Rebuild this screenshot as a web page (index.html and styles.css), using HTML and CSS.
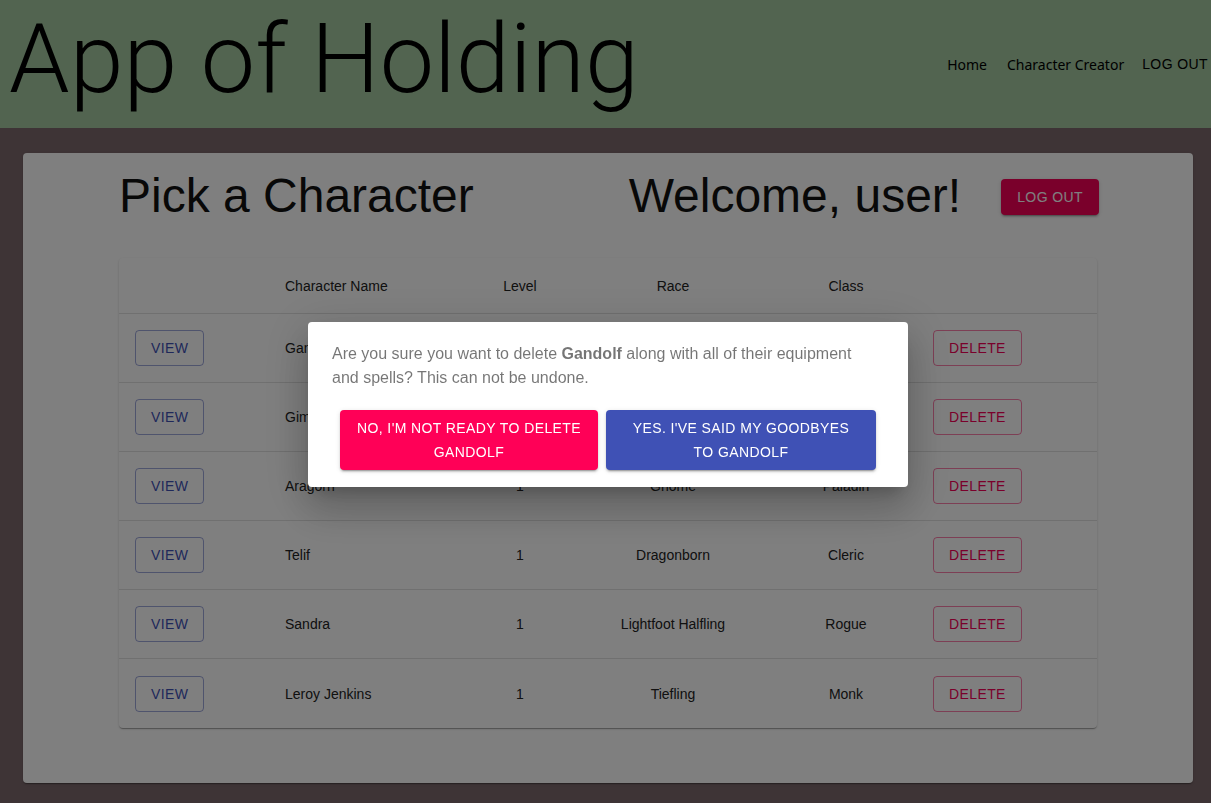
FILE: index.html
```html
<!DOCTYPE html>
<html lang="en">
<head>
<meta charset="utf-8">
<title>App of Holding</title>
<link rel="stylesheet" href="styles.css">
</head>
<body>
<header class="topbar">
  <h1 class="brand">App of Holding</h1>
  <nav class="nav">
    <a class="nav-link" href="#">Home</a>
    <a class="nav-link" href="#">Character Creator</a>
    <button class="nav-logout">LOG OUT</button>
  </nav>
</header>
<main class="main">
  <section class="card">
    <div class="title-row">
      <h2 class="title">Pick a Character</h2>
      <div class="welcome-group">
        <h2 class="title">Welcome, user!</h2>
        <button class="btn-contained">LOG OUT</button>
      </div>
    </div>
    <div class="table">
      <div class="row head">
        <div class="cell"></div>
        <div class="cell left">Character Name</div>
        <div class="cell center">Level</div>
        <div class="cell center">Race</div>
        <div class="cell center">Class</div>
        <div class="cell"></div>
      </div>
      <div class="row">
        <div class="cell"><button class="btn-view">VIEW</button></div>
        <div class="cell left">Gandolf</div>
        <div class="cell center">1</div>
        <div class="cell center">Human</div>
        <div class="cell center">Wizard</div>
        <div class="cell del"><button class="btn-delete">DELETE</button></div>
      </div>
      <div class="row">
        <div class="cell"><button class="btn-view">VIEW</button></div>
        <div class="cell left">Gimli</div>
        <div class="cell center">1</div>
        <div class="cell center">Hill Dwarf</div>
        <div class="cell center">Fighter</div>
        <div class="cell del"><button class="btn-delete">DELETE</button></div>
      </div>
      <div class="row">
        <div class="cell"><button class="btn-view">VIEW</button></div>
        <div class="cell left">Aragorn</div>
        <div class="cell center">1</div>
        <div class="cell center">Gnome</div>
        <div class="cell center">Paladin</div>
        <div class="cell del"><button class="btn-delete">DELETE</button></div>
      </div>
      <div class="row">
        <div class="cell"><button class="btn-view">VIEW</button></div>
        <div class="cell left">Telif</div>
        <div class="cell center">1</div>
        <div class="cell center">Dragonborn</div>
        <div class="cell center">Cleric</div>
        <div class="cell del"><button class="btn-delete">DELETE</button></div>
      </div>
      <div class="row">
        <div class="cell"><button class="btn-view">VIEW</button></div>
        <div class="cell left">Sandra</div>
        <div class="cell center">1</div>
        <div class="cell center">Lightfoot Halfling</div>
        <div class="cell center">Rogue</div>
        <div class="cell del"><button class="btn-delete">DELETE</button></div>
      </div>
      <div class="row last">
        <div class="cell"><button class="btn-view">VIEW</button></div>
        <div class="cell left">Leroy Jenkins</div>
        <div class="cell center">1</div>
        <div class="cell center">Tiefling</div>
        <div class="cell center">Monk</div>
        <div class="cell del"><button class="btn-delete">DELETE</button></div>
      </div>
    </div>
  </section>
</main>
<div class="backdrop">
  <div class="dialog">
    <p class="dialog-text">Are you sure you want to delete <b>Gandolf</b> along with all of their equipment and spells? This can not be undone.</p>
    <div class="dialog-actions">
      <button class="btn-dlg pink">NO, I'M NOT READY TO DELETE<br>GANDOLF</button>
      <button class="btn-dlg blue">YES. I'VE SAID MY GOODBYES<br>TO GANDOLF</button>
    </div>
  </div>
</div>
</body>
</html>
```
FILE: styles.css
```css
* { box-sizing: border-box; }
html, body { margin: 0; height: 100%; }
body {
  background: #7c686c;
  font-family: "Liberation Sans", Arial, sans-serif;
  overflow: hidden;
}
button { font-family: "Liberation Sans", Arial, sans-serif; cursor: pointer; }

.topbar {
  height: 128px;
  background: #a4c8a0;
  display: flex;
  justify-content: space-between;
  align-items: flex-start;
}
.brand {
  margin: 11px 0 0 9px;
  font-family: Roboto, "Liberation Sans", sans-serif;
  font-weight: 300;
  font-size: 97px;
  line-height: 97px;
  color: #000;
  letter-spacing: 0;
}
.nav {
  display: flex;
  align-items: center;
  height: 128px;
  margin-right: 3px;
}
.nav-link {
  font-family: "Noto Sans", sans-serif;
  font-size: 14px;
  color: #000;
  text-decoration: none;
  margin-right: 20px;
}
.nav-link + .nav-link { margin-right: 18px; }
.nav-logout {
  background: none;
  border: 0;
  padding: 0;
  font-size: 14px;
  letter-spacing: 0.4px;
  color: #000;
}

.main {
  padding: 25px 18px 20px 23px;
}
.card {
  height: 630px;
  background: #fff;
  border-radius: 4px;
  padding: 15px 96px 0;
  box-shadow: 0 2px 1px -1px rgba(0,0,0,.2), 0 1px 1px 0 rgba(0,0,0,.14), 0 1px 3px 0 rgba(0,0,0,.12);
}
.title-row {
  display: flex;
  align-items: center;
  justify-content: space-between;
  margin-bottom: 34px;
}
.title {
  margin: 0;
  font-size: 48px;
  line-height: 56px;
  font-weight: 400;
  color: #111;
}
.welcome-group {
  display: flex;
  align-items: center;
  gap: 40px;
  margin-right: -2px;
}
.btn-contained {
  background: #f50057;
  color: #fff;
  border: 0;
  border-radius: 4px;
  padding: 6px 16px;
  font-size: 14px;
  font-weight: 500;
  line-height: 24px;
  letter-spacing: 0.4px;
  margin-top: 2px;
  box-shadow: 0 3px 1px -2px rgba(0,0,0,.2), 0 2px 2px 0 rgba(0,0,0,.14), 0 1px 5px 0 rgba(0,0,0,.12);
}

.table {
  border-radius: 4px;
  background: #fff;
  box-shadow: 0 2px 1px -1px rgba(0,0,0,.2), 0 1px 1px 0 rgba(0,0,0,.14), 0 1px 3px 0 rgba(0,0,0,.12);
}
.row {
  display: grid;
  grid-template-columns: 150px 191px 120px 186px 160px 171px;
  height: 69px;
  border-bottom: 1px solid #e0e0e0;
  align-items: center;
  font-size: 14px;
  color: #222;
}
.row.head { height: 56px; padding-top: 0; }
.row.last { border-bottom: 0; }
.cell { padding: 0 16px; white-space: nowrap; color: #222; }
.cell.center { text-align: center; padding: 0; }
.cell.del { padding-left: 7px; }

.btn-view, .btn-delete {
  background: transparent;
  border-radius: 4px;
  padding: 5px 15px;
  font-size: 14px;
  font-weight: 500;
  line-height: 24px;
  letter-spacing: 0.4px;
}
.btn-view {
  color: #3f51b5;
  border: 1px solid rgba(63,81,181,.5);
}
.btn-delete {
  color: #f50057;
  border: 1px solid rgba(245,0,87,.5);
}

.backdrop {
  position: fixed;
  inset: 0;
  background: rgba(0,0,0,.5);
  display: flex;
  align-items: center;
  justify-content: center;
  padding: 5px 0 0 5px;
}
.dialog {
  width: 600px;
  background: #fff;
  border-radius: 4px;
  box-shadow: 0 11px 15px -7px rgba(0,0,0,.2), 0 24px 38px 3px rgba(0,0,0,.14), 0 9px 46px 8px rgba(0,0,0,.12);
}
.dialog-text {
  margin: 0;
  padding: 20px 40px 20px 24px;
  font-size: 16px;
  line-height: 24px;
  color: rgba(0,0,0,.54);
}
.dialog-text b { font-weight: 700; }
.dialog-actions {
  display: flex;
  justify-content: center;
  gap: 8px;
  padding: 0 32px 17px;
}
.btn-dlg {
  border: 0;
  border-radius: 4px;
  color: #fff;
  padding: 6px 16px;
  font-size: 14px;
  font-weight: 500;
  line-height: 24px;
  letter-spacing: 0.4px;
  box-shadow: 0 3px 1px -2px rgba(0,0,0,.2), 0 2px 2px 0 rgba(0,0,0,.14), 0 1px 5px 0 rgba(0,0,0,.12);
}
.btn-dlg.pink { background: #ff0057; width: 258px; }
.btn-dlg.blue { background: #3f51b5; width: 270px; }
```
